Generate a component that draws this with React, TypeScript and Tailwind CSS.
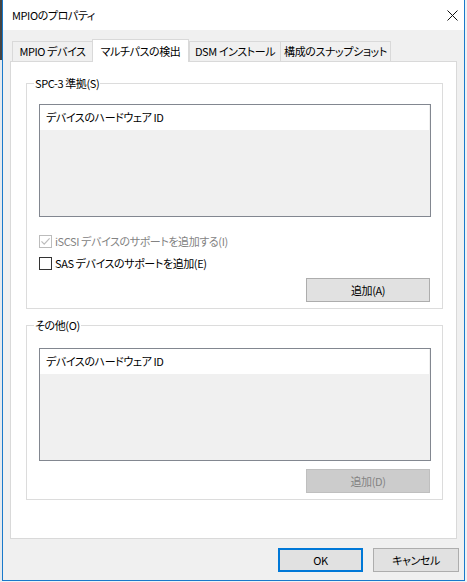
import React from "react";

const FONT =
  "font-['Noto_Sans_CJK_JP',sans-serif] [font-feature-settings:'palt'] text-[11px] tracking-[-0.4px] text-black whitespace-nowrap";

const Check = ({ checked, disabled }: { checked?: boolean; disabled?: boolean }) => (
  <span
    className={`w-[13px] h-[13px] border bg-white flex items-center justify-center shrink-0 ${
      disabled ? "border-[#bcbcbc]" : "border-[#333333]"
    }`}
  >
    {checked && (
      <svg width="11" height="11" viewBox="0 0 11 11">
        <path d="M1.5 5.3 L4.2 8.2 L9.6 2.4" fill="none" stroke={disabled ? "#bcbcbc" : "#333333"} strokeWidth="1.2" />
      </svg>
    )}
  </span>
);

const ListBox = () => (
  <div className="h-[113px] border border-[#828790] bg-[#f0f0f0]">
    <div className="h-[25px] bg-white mr-[1px] pl-[6px] flex items-center">デバイスのハードウェア ID</div>
  </div>
);

const Btn = ({ label, disabled }: { label: string; disabled?: boolean }) => (
  <div
    className={`self-end mr-[1px] w-[124px] h-[24px] border flex items-center justify-center ${
      disabled ? "bg-[#cccccc] border-[#bfbfbf] text-[#838383]" : "bg-[#e1e1e1] border-[#adadad]"
    }`}
  >
    {label}
  </div>
);

const TABS = ["MPIO デバイス", "マルチパスの検出", "DSM インストール", "構成のスナップショット"];
const TAB_W = ["w-[80px]", "w-[97px]", "w-[91px]", "w-[111px]"];

export default function App() {
  return (
    <div className={`w-[467px] h-[582px] flex bg-[#eef1f4] ${FONT}`}>
      <div className="w-[2px] flex flex-col">
        <div className="h-[60px] bg-[#444444]" />
        <div className="flex-1 bg-[#e4e9ee]" />
      </div>
      <div className="w-[463px] h-[581px] border-l border-r border-b border-[#1979ca] flex flex-col">
        {/* title bar */}
        <div className="h-[30px] bg-white flex items-center justify-between pl-[9px] pr-[6px]">
          <span>MPIOのプロパティ</span>
          <svg width="11" height="11" viewBox="0 0 11 11">
            <path d="M0.5 0.5 L10.5 10.5 M10.5 0.5 L0.5 10.5" stroke="#111111" strokeWidth="1" fill="none" />
          </svg>
        </div>

        <div className="flex-1 bg-[#f0f0f0] pt-[9px]">
          {/* tabs */}
          <div className="flex items-end h-[22px] ml-[9px]">
            {TABS.map((t, i) =>
              i === 1 ? (
                <div
                  key={t}
                  className={`${TAB_W[i]} h-[23px] -mb-px relative z-10 bg-white border-t border-l border-r border-[#d9d9d9] flex items-center justify-center`}
                >
                  {t}
                </div>
              ) : (
                <div
                  key={t}
                  className={`${TAB_W[i]} h-[20px] bg-[#f0f0f0] border-t border-l border-[#d9d9d9] flex items-center justify-center ${
                    i === 3 ? "border-r" : ""
                  }`}
                >
                  {t}
                </div>
              )
            )}
          </div>

          {/* panel */}
          <div className="ml-[7px] w-[447px] h-[478px] bg-white border border-[#d9d9d9] flex flex-col">
            <div className="relative ml-[15px] mt-[21px] w-[417px] h-[226px] border border-[#dcdcdc] pt-[20px] pl-[12px] pr-[11px] flex flex-col">
              <span className="absolute left-[7px] top-[-9px] leading-[16px] bg-white px-[1px]">SPC-3 準拠(S)</span>
              <ListBox />
              <div className="mt-[18px] h-[13px] flex items-center">
                <Check checked disabled />
                <span className="ml-[3px] text-[#838383]">iSCSI デバイスのサポートを追加する(I)</span>
              </div>
              <div className="mt-[9px] h-[13px] flex items-center">
                <Check />
                <span className="ml-[3px]">SAS デバイスのサポートを追加(E)</span>
              </div>
              <div className="mt-[8px] flex flex-col">
                <Btn label="追加(A)" />
              </div>
            </div>

            <div className="relative ml-[15px] mt-[16px] w-[417px] h-[175px] border border-[#dcdcdc] pt-[22px] pl-[12px] pr-[11px] flex flex-col">
              <span className="absolute left-[7px] top-[-9px] leading-[16px] bg-white px-[1px]">その他(O)</span>
              <ListBox />
              <div className="mt-[8px] flex flex-col">
                <Btn label="追加(D)" disabled />
              </div>
            </div>
          </div>

          {/* dialog buttons */}
          <div className="mt-[9px] flex justify-end gap-[10px] pr-[5px]">
            <div className="w-[85px] h-[24px] border-2 border-[#0078d7] bg-[#e1e1e1] flex items-center justify-center">OK</div>
            <div className="w-[86px] h-[24px] border border-[#adadad] bg-[#e1e1e1] flex items-center justify-center">キャンセル</div>
          </div>
        </div>
      </div>
    </div>
  );
}
